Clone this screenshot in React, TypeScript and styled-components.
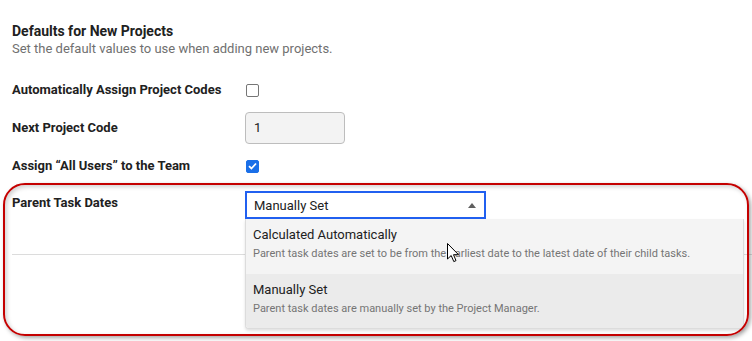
import React from "react";
import styled, { createGlobalStyle } from "styled-components";

const Global = createGlobalStyle`
  html, body { margin: 0; padding: 0; background: #fff; }
  body { font-family: Roboto, "Noto Sans", Arial, sans-serif; color: #212121; }
  * { box-sizing: border-box; }
`;

const Page = styled.div`
  position: relative;
  width: 752px;
  height: 341px;
  overflow: hidden;
  padding: 22px 0 0 12px;
`;

const Title = styled.h2`
  margin: 0;
  font-size: 14px;
  line-height: 18px;
  font-weight: 700;
  color: #212121;
`;

const Subtitle = styled.p`
  margin: 0;
  font-size: 13px;
  line-height: 18px;
  color: #707070;
`;

const Rows = styled.div`
  display: flex;
  flex-direction: column;
  margin-top: 20px;
`;

const Row = styled.div<{ $gap: number; $top?: boolean; $divider?: boolean }>`
  display: grid;
  grid-template-columns: 233px 1fr;
  align-items: ${(p) => (p.$top ? "start" : "center")};
  margin-top: ${(p) => p.$gap}px;
  min-height: 24px;
  ${(p) =>
    p.$divider
      ? `height: 64px; border-bottom: 1px solid #dcdcdc;`
      : ""}
`;

const Label = styled.div`
  font-size: 13px;
  line-height: 24px;
  font-weight: 700;
  color: #212121;
`;

const Check = styled.span<{ $on?: boolean }>`
  display: flex;
  align-items: center;
  justify-content: center;
  width: 13px;
  height: 13px;
  margin-left: 1px;
  border-radius: 2px;
  border: 1px solid ${(p) => (p.$on ? "#1a6fe8" : "#767676")};
  background: ${(p) => (p.$on ? "#1a6fe8" : "#fff")};
`;

const TextInput = styled.div`
  width: 100px;
  height: 32px;
  border: 1px solid #bdbdbd;
  border-radius: 4px;
  background: #f3f3f3;
  font-size: 13px;
  line-height: 30px;
  padding-left: 8px;
  color: #212121;
`;

const Field = styled.div`
  position: relative;
`;

const Select = styled.div`
  display: flex;
  align-items: center;
  justify-content: space-between;
  width: 241px;
  height: 28px;
  border: 2px solid #2160f0;
  padding: 0 7px 0 7px;
  font-size: 13px;
  color: #212121;
  background: #fff;
`;

const Caret = styled.span`
  width: 0;
  height: 0;
  border-left: 4px solid transparent;
  border-right: 4px solid transparent;
  border-bottom: 5px solid #5f5f5f;
  margin-right: 1px;
`;

const Menu = styled.div`
  position: absolute;
  left: 0;
  top: 28px;
  width: 499px;
  border: 1px solid #dcdcdc;
  border-top: none;
  border-radius: 0 0 4px 4px;
  background: #fff;
  box-shadow: 0 2px 3px rgba(0, 0, 0, 0.12);
  overflow: hidden;
  z-index: 2;
`;

const Option = styled.div<{ $bg: string; $h: number }>`
  height: ${(p) => p.$h}px;
  background: ${(p) => p.$bg};
  padding: 7px 7px 0 7px;
`;

const OptTitle = styled.div`
  font-size: 13px;
  line-height: 18px;
  color: #212121;
`;

const OptDesc = styled.div`
  margin-top: 2px;
  font-size: 11px;
  line-height: 16px;
  color: #757575;
`;

const Highlight = styled.div`
  position: absolute;
  left: 3px;
  top: 183px;
  width: 746px;
  height: 153px;
  border: 2px solid #c40000;
  border-radius: 22px;
  box-shadow: 2px 2px 4px rgba(0, 0, 0, 0.35),
    inset 2px 2px 4px rgba(0, 0, 0, 0.18);
  pointer-events: none;
  z-index: 3;
`;

const Cursor = styled.svg`
  position: absolute;
  left: 447px;
  top: 243px;
  z-index: 4;
`;

const CheckMark = () => (
  <svg width="9" height="8" viewBox="0 0 9 8">
    <path d="M1 4.2 L3.4 6.5 L8 1.5" fill="none" stroke="#fff" strokeWidth="1.8" />
  </svg>
);

export default function App() {
  return (
    <>
      <Global />
      <Page>
        <Title>Defaults for New Projects</Title>
        <Subtitle>Set the default values to use when adding new projects.</Subtitle>
        <Rows>
          <Row $gap={0}>
            <Label>Automatically Assign Project Codes</Label>
            <Check />
          </Row>
          <Row $gap={10}>
            <Label>Next Project Code</Label>
            <TextInput>1</TextInput>
          </Row>
          <Row $gap={10}>
            <Label>Assign “All Users” to the Team</Label>
            <Check $on>
              <CheckMark />
            </Check>
          </Row>
          <Row $gap={13} $top $divider>
            <Label>Parent Task Dates</Label>
            <Field>
              <Select>
                <span>Manually Set</span>
                <Caret />
              </Select>
              <Menu>
                <Option $bg="#f4f4f4" $h={55}>
                  <OptTitle>Calculated Automatically</OptTitle>
                  <OptDesc>
                    Parent task dates are set to be from the earliest date to the latest date of their child tasks.
                  </OptDesc>
                </Option>
                <Option $bg="#ebebeb" $h={54}>
                  <OptTitle>Manually Set</OptTitle>
                  <OptDesc>Parent task dates are manually set by the Project Manager.</OptDesc>
                </Option>
              </Menu>
            </Field>
          </Row>
        </Rows>
        <Highlight />
        <Cursor width="13" height="20" viewBox="0 0 13 20">
          <path
            d="M0.5 0.5 L0.5 16 L4.2 12.5 L6.8 18.6 L9 17.6 L6.5 11.7 L11.5 11.7 Z"
            fill="#fff"
            stroke="#000"
            strokeWidth="1"
            strokeLinejoin="miter"
          />
        </Cursor>
      </Page>
    </>
  );
}
